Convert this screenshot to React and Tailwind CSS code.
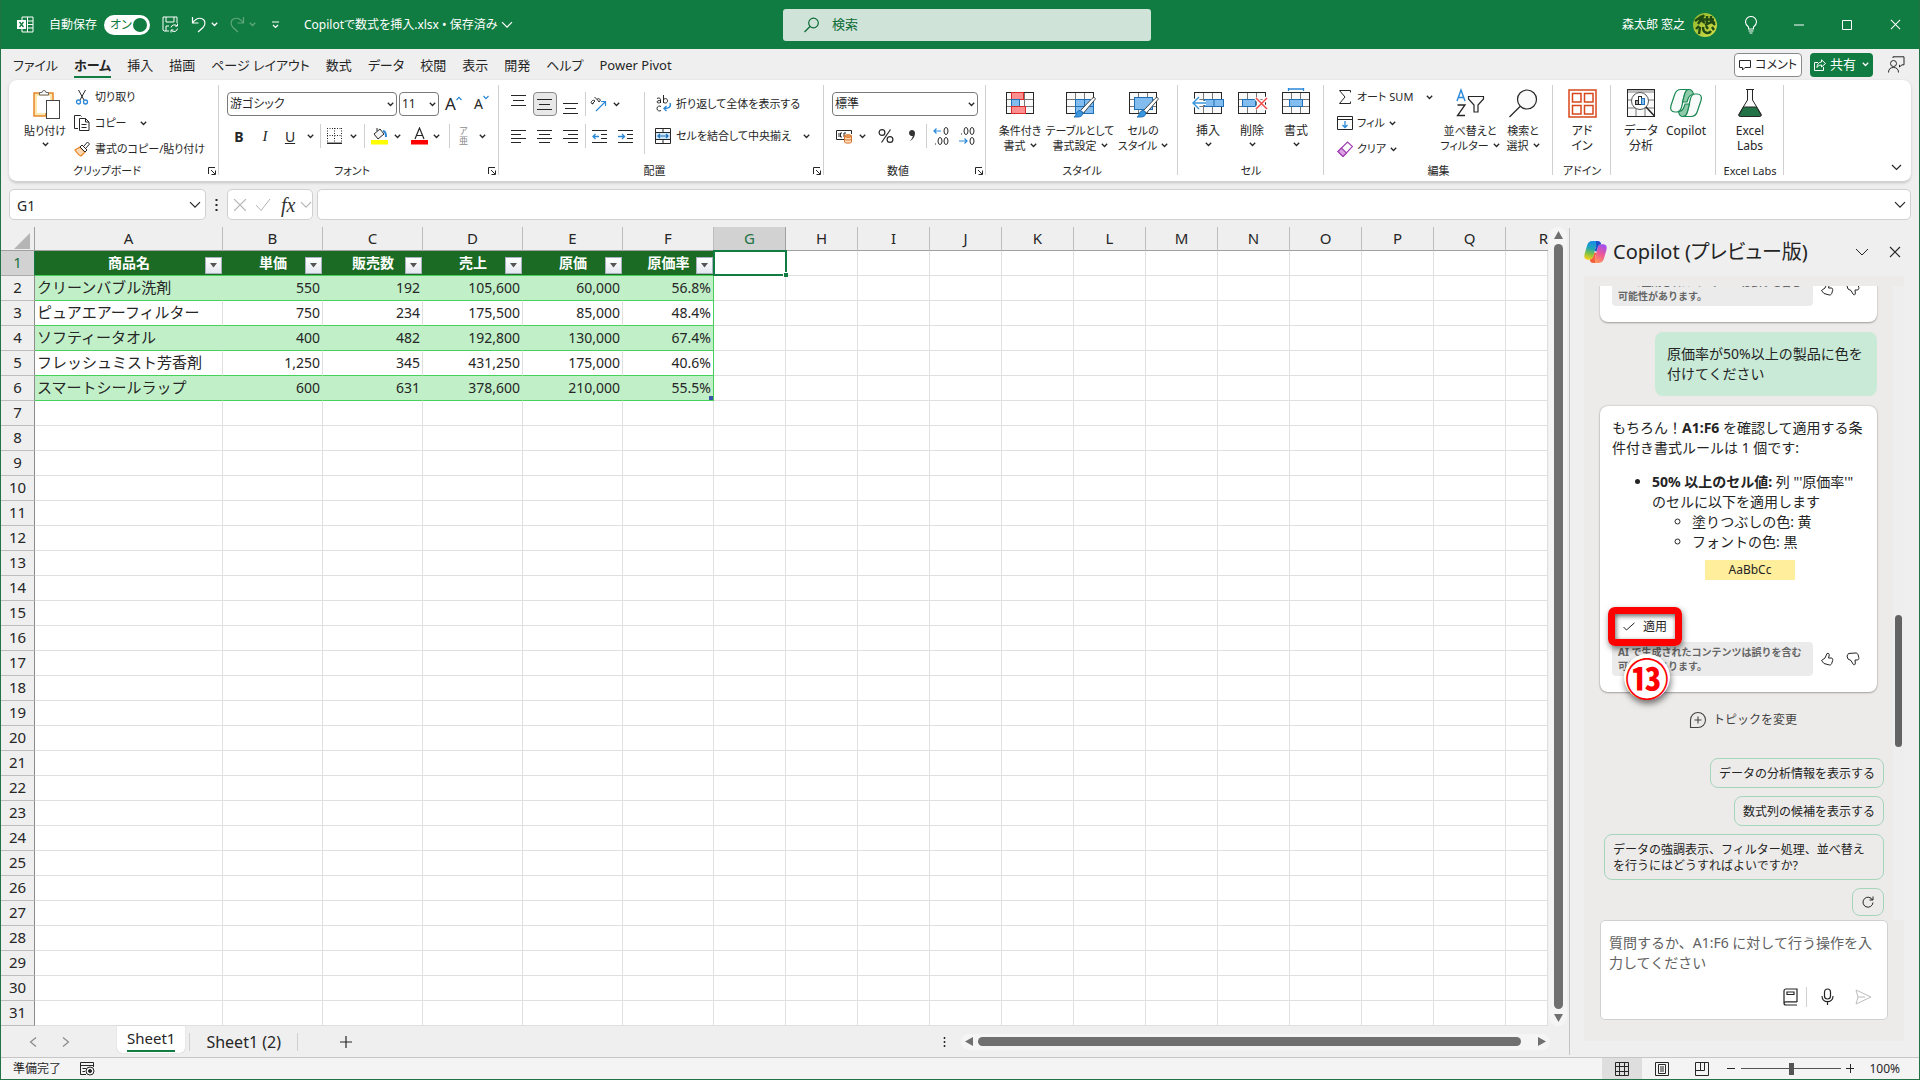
import { useState } from 'react';

const MENU = ['ファイル', 'ホーム', '挿入', '描画', 'ページ レイアウト', '数式', 'データ', '校閲', '表示', '開発', 'ヘルプ', 'Power Pivot'];

const COLUMNS = ['A', 'B', 'C', 'D', 'E', 'F', 'G', 'H', 'I', 'J', 'K', 'L', 'M', 'N', 'O', 'P', 'Q', 'R'];

const HEADERS = ['商品名', '単価', '販売数', '売上', '原価', '原価率'];

const PRODUCTS = [
  ['クリーンバブル洗剤', '550', '192', '105,600', '60,000', '56.8%'],
  ['ピュアエアーフィルター', '750', '234', '175,500', '85,000', '48.4%'],
  ['ソフティータオル', '400', '482', '192,800', '130,000', '67.4%'],
  ['フレッシュミスト芳香剤', '1,250', '345', '431,250', '175,000', '40.6%'],
  ['スマートシールラップ', '600', '631', '378,600', '210,000', '55.5%'],
];

const ROW_COUNT = 31;

const Svg = ({ w, h, children, className = '', sw = 1 }) => (
  <svg width={w} height={h} viewBox={`0 0 ${w} ${h}`} fill="none" stroke="currentColor" strokeWidth={sw} className={`shrink-0 ${className}`} aria-hidden="true">
    {children}
  </svg>
);

const Chevron = ({ className = '' }) => (
  <Svg w={7} h={5} sw={1.3} className={className}><path d="M.8 .8 3.5 3.5 6.2 .8" /></Svg>
);

const BigChevron = ({ className = '' }) => (
  <Svg w={12} h={8} sw={1.2} className={className}><path d="M1 1.2 6 6.2 11 1.2" /></Svg>
);

const CloseIcon = ({ size = 12, className = '' }) => (
  <svg width={size} height={size} viewBox="0 0 12 12" fill="none" stroke="currentColor" strokeWidth="1.1" className={className} aria-hidden="true">
    <path d="m1 1 10 10M11 1 1 11" />
  </svg>
);

/* ---------- title bar ---------- */

const TitleBar = () => {
  const [autoSave, setAutoSave] = useState(true);
  return (
    <header className="flex h-[49px] shrink-0 items-center bg-[#107c41] text-[12px] text-white [font-feature-settings:'palt']">
      <div className="flex flex-1 items-center pl-4">
        <Svg w={17} h={17}>
          <path d="M5 4V1h11v15H5v-3M10.500 1v15M11 5h5M11 8.500h5M11 12h5" />
          <rect x="0" y="4" width="9" height="9" fill="white" stroke="none" />
          <path d="m2.500 6 4 5M6.500 6l-4 5" stroke="#107c41" strokeWidth="1.300" />
        </Svg>
        <span id="autosave" className="ml-[15px]">自動保存</span>
        <button role="switch" aria-checked={autoSave} aria-labelledby="autosave" onClick={() => setAutoSave(!autoSave)}
          className="ml-[7px] flex h-5 w-[46px] items-center justify-between rounded-full bg-white pr-[3px] pl-[6px] text-[#107c41]">
          <span>オン</span>
          <span className="h-[14px] w-[14px] rounded-full bg-[#107c41]" />
        </button>
        <button aria-label="上書き保存" className="ml-3">
          <Svg w={17} h={17}>
            <path d="M7 15H2L1 14V1h14v6M4 1v5h8V1M4 15v-5h3" />
            <path d="M9 11.500a3.500 3.500 0 0 1 6-1.500M15.500 7.500V10H13M15.500 12.500a3.500 3.500 0 0 1-6 2M9 16.500V14h2.500" />
          </Svg>
        </button>
        <button aria-label="元に戻す" className="ml-3 flex items-center gap-1">
          <Svg w={16} h={17} sw={1.2}><path d="M1.500 1v6h6M1.500 7C4 3.500 7 1.500 10.500 2.500c4 1.300 4.500 6 1.500 9L7 16" /></Svg>
          <Chevron />
        </button>
        <button aria-label="やり直し" className="ml-[11px] flex items-center gap-1 text-[#5fa67e]">
          <Svg w={16} h={17} sw={1.2}><path d="M14.500 1v6h-6M14.500 7C12 3.500 9 1.500 5.500 2.500c-4 1.300-4.500 6-1.500 9L9 16" /></Svg>
          <Chevron />
        </button>
        <button aria-label="クイック アクセスのカスタマイズ" className="ml-[15px]">
          <Svg w={9} h={8} sw={1.2}><path d="M1 1h7M2 4l2.500 2.500L7 4" /></Svg>
        </button>
        <button className="ml-6 flex items-center gap-1 whitespace-nowrap">
          Copilotで数式を挿入.xlsx • 保存済み <BigChevron />
        </button>
      </div>
      <label className="ml-4 flex h-8 w-[368px] items-center gap-3 rounded-[3px] bg-[#cfe3d8] pl-5 text-[#0b6a35]">
        <Svg w={17} h={16} sw={1.2}><circle cx="10.500" cy="6" r="4.800" /><path d="M7 9.500 1.500 15" /></Svg>
        <input aria-label="検索" placeholder="検索" className="w-full bg-transparent text-[13px] outline-none placeholder:text-[#0b6a35]" />
      </label>
      <div className="flex flex-1 items-center justify-end pr-[18px]">
        <span>森太郎 窓之</span>
        <Svg w={24} h={24} className="ml-2">
          <defs>
            <linearGradient id="avatar" x1="0" y1="0" x2="1" y2="1"><stop offset="0" stopColor="#8fb52a" /><stop offset="1" stopColor="#d6e04a" /></linearGradient>
          </defs>
          <circle cx="12" cy="12" r="12" fill="url(#avatar)" stroke="none" />
          <path d="M2 8 9 3M5 5l7 5M11 2l-6 9M14 3v9M9 6.500h12M18 3v5l4 2M12 12l7-3 3 3M3 16l3-3M7 14l-1 7M10 14c0 7 6 7 8 4M13 13l2 3M19 14l2 3" stroke="#1f4a14" strokeWidth="2.400" />
        </Svg>
        <button aria-label="ヒント" className="ml-[27px]">
          <Svg w={14} h={18} sw={1.1}><path d="M4.500 13v-2C2.500 9.500 1.500 8 1.500 6a5.500 5.500 0 0 1 11 0c0 2-1 3.500-3 5v2zM4.500 15h5M5.500 17h3" /></Svg>
        </button>
        <button aria-label="最小化" className="ml-9"><Svg w={10} h={10}><path d="M0 5h10" /></Svg></button>
        <button aria-label="最大化" className="ml-[38px]"><Svg w={10} h={10}><path d="M.5 .5h9v9h-9z" /></Svg></button>
        <button aria-label="閉じる" className="ml-[38px]"><CloseIcon size={11} /></button>
      </div>
    </header>
  );
};

/* ---------- ribbon ---------- */

const MenuBar = () => (
  <nav className="flex h-[31px] shrink-0 items-center pr-[14px] pl-1 text-[13px] [font-feature-settings:'palt']">
    {MENU.map((name) => (
      <button key={name} className="px-2 pt-[2px] whitespace-nowrap">
        <span className={name === 'ホーム' ? 'block border-b-2 border-[#107c41] leading-[22px] font-bold' : 'block border-b-2 border-transparent leading-[22px]'}>{name}</span>
      </button>
    ))}
    <div className="ml-auto flex items-center">
      <button className="flex h-6 items-center gap-1 rounded-[4px] border border-[#8a8a8a] bg-white px-1 text-[12px]">
        <Svg w={12} h={12}><path d="M.5 1.500h11v7H6L3.500 11V8.500h-3z" /></Svg>コメント
      </button>
      <button className="ml-2 flex h-6 items-center gap-1 rounded-[4px] bg-[#107c41] px-1 text-white">
        <Svg w={12} h={12}><path d="M4 3.500H.5v8h9V8" /><path d="M7.500 3V.8L11.500 4.500l-4 3.500V6C5 6 4 7 3 8.500 3 5.500 4.500 3.200 7.500 3z" /></Svg>
        共有<Chevron className="ml-[2px]" />
      </button>
      <button aria-label="フィードバック" className="ml-[14px]">
        <Svg w={18} h={17}><circle cx="6.500" cy="7.500" r="3" /><path d="M1.500 16.500c0-3.500 2-5 5-5s5 1.500 5 5M6 2V.8h11v8h-2L12.500 11V8.800" /></Svg>
      </button>
    </div>
  </nav>
);

const Group = ({ label, launcher, className, children }) => (
  <section className={`relative shrink-0 ${className}`}>
    <div className="h-[83px]">{children}</div>
    <div className={`text-center text-[11px] leading-4 whitespace-nowrap ${launcher ? 'pr-[14px]' : ''}`}>{label}</div>
    {launcher && (
      <button aria-label={`${label}の設定`} className="absolute right-[3px] bottom-[6px]">
        <Svg w={8} h={8}><path d="M7 .5H.5V7M3 3l4 4M7.500 3.500v4h-4" /></Svg>
      </button>
    )}
    <span className="absolute top-[5px] right-0 h-[90px] w-px bg-[#d0d0d0]" />
  </section>
);

const Sep = ({ className = '' }) => <span className={`h-6 w-px shrink-0 bg-[#d0d0d0] ${className}`} />;

const BigButton = ({ icon, lines, chevron, below, className = '' }) => (
  <button className={`flex flex-col items-center leading-[15px] whitespace-nowrap ${className}`}>
    <span className="mb-[5px] flex h-[30px] items-center">{icon}</span>
    {lines.map((line, i) => (
      <span key={line} className="flex items-center gap-1">
        {line}{chevron && i === lines.length - 1 && <Chevron />}
      </span>
    ))}
    {below && <Chevron className="mt-1" />}
  </button>
);

const Combo = ({ label, value, className }) => (
  <div className={`relative h-6 ${className}`}>
    <select aria-label={label} className="h-6 w-full appearance-none rounded-[4px] border border-[#7a7a7a] bg-white pl-[2px] text-[12px] leading-5">
      <option>{value}</option>
    </select>
    <Chevron className="pointer-events-none absolute top-[10px] right-[3px]" />
  </div>
);

const Lines = ({ rows }) => (
  <Svg w={16} h={15}>{rows.map(([x1, x2, y]) => <path key={y} d={`M${x1} ${y}.500H${x2}`} />)}</Svg>
);

const GridIcon = ({ children }) => (
  <Svg w={32} h={30}>
    <rect x="2.500" y="4.500" width="27" height="21" fill="#fafafa" />
    <path d="M11.500 5v20M20.500 5v20M3 11.500h26M3 18.500h26" stroke="#777" />
    {children}
  </Svg>
);

const Brush = () => (
  <>
    <path d="M31 11.500 19.500 25l-3-2.500L28 10.500c2-2 4-.5 3 1z" fill="white" stroke="#444" />
    <path d="M16 22.500c2 .5 3 2 2.500 4-1 3-5.500 2.500-8.500 2.500 2.500-1 2-6.500 6-6.500z" fill="#3a96dd" stroke="#1e6fb5" />
  </>
);

const Decimals = ({ children }) => (
  <Svg w={20} h={22}>{children}</Svg>
);

const Ribbon = () => (
  <div className="relative mx-2 flex h-[102px] shrink-0 rounded-lg border-b border-[#d0d0d0] bg-white text-[12px] shadow-[0_1px_3px_rgba(0,0,0,0.18)] [font-feature-settings:'palt']">
    <Group label="クリップボード" launcher className="w-[210px]">
      <div className="flex pt-1">
        <BigButton lines={['貼り付け']} below className="ml-3 w-12 pt-1 text-[11px]" icon={
          <Svg w={29} h={31} className="ml-[3px]">
            <path d="M2 5h19v9h-7v14H2z" fill="#fde7b0" stroke="#e8862a" strokeWidth="1.500" />
            <path d="M5 8h13v6h-4v11H5z" fill="white" stroke="none" />
            <path d="M7.500 7V4.500h2.500a2 2 0 0 1 4 0h2.500V7z" fill="#fafafa" stroke="#666" />
            <rect x="14.500" y="12.500" width="13" height="18" fill="white" stroke="#444" />
          </Svg>} />
        <div className="ml-[5px] flex flex-col text-[11px] whitespace-nowrap [&>button]:flex [&>button]:h-[26px] [&>button]:items-center [&>button]:gap-[5px]">
          <button>
            <Svg w={16} h={16}><path d="M4.500 1 10 11M11.500 1 6 11" /><circle cx="4.500" cy="13" r="2" stroke="#2b88d8" strokeWidth="1.300" /><circle cx="11.500" cy="13" r="2" stroke="#2b88d8" strokeWidth="1.300" /></Svg>
            切り取り
          </button>
          <button>
            <Svg w={16} h={16}><path d="M4 13.500H.5V.5h6l1 1" /><path d="M5.500 3.500h6l3.500 3.500v8.500H5.500zM11.500 3.500V7H15M7.500 9.500h5M7.500 12.500h5" /></Svg>
            コピー<Chevron className="ml-2" />
          </button>
          <button>
            <Svg w={16} h={16}><path d="M1 9l5-3 5 5-4 4C4 14 3 12 1 9z" fill="#fbd9b5" stroke="#e8862a" strokeWidth="1.300" /><path d="m6 6 2-2 5 5-2 2zM9.500 5.500l4-4.500 2 2-4 4.500" fill="white" /></Svg>
            書式のコピー/貼り付け
          </button>
        </div>
      </div>
    </Group>

    <Group label="フォント" launcher className="w-[280px]">
      <div className="flex flex-col gap-2 pt-3 pl-2">
        <div className="flex h-6 items-center">
          <Combo label="フォント名" value="游ゴシック" className="w-[170px]" />
          <Combo label="フォント サイズ" value="11" className="ml-[2px] w-10" />
          <button aria-label="フォント サイズの拡大" className="ml-[6px] flex items-start text-[17px] leading-5">A<Svg w={6} h={5} sw={1.2} className="mt-[2px] text-[#2b88d8]"><path d="M.5 4 3 1.300 5.500 4" /></Svg></button>
          <button aria-label="フォント サイズの縮小" className="ml-3 flex items-start text-[14px] leading-[22px]">A<Svg w={6} h={5} sw={1.2} className="mt-[2px] text-[#2b88d8]"><path d="M.5 1 3 3.700 5.500 1" /></Svg></button>
        </div>
        <div className="flex h-6 items-center">
          <button className="ml-1 w-4 text-[14px] font-bold">B</button>
          <button className="ml-[10px] w-4 font-['Liberation_Serif'] text-[15px] italic">I</button>
          <button className="ml-[9px] w-4 text-[14px] underline">U</button>
          <Chevron className="ml-[9px]" />
          <Sep className="ml-[6px]" />
          <Svg w={16} h={16} className="ml-[6px]"><path d="M.5 0v15M7.500 0v15M14.500 0v15M0 .5h15M0 7.500h15" strokeDasharray="1 1.500" /><path d="M0 15.300h15" strokeWidth="1.500" /></Svg>
          <Chevron className="ml-[7px]" />
          <Sep className="ml-[7px]" />
          <Svg w={18} h={18} className="ml-[6px]"><path d="m3 7 6-5 4 5-6 5zM6 4V1" fill="#f4f4f4" /><path d="M12 4c3 0 3 3 3 6" stroke="#2b88d8" strokeWidth="2" /><rect x="0" y="13" width="17" height="4.500" fill="#ff0" stroke="none" /></Svg>
          <Chevron className="ml-[5px]" />
          <Svg w={18} h={18} className="ml-[10px]"><path d="M4 12 8.500 1 13 12M5.500 8.500h6" strokeWidth="1.200" /><rect x="0" y="13" width="17" height="4.500" fill="red" stroke="none" /></Svg>
          <Chevron className="ml-1" />
          <Sep className="ml-[9px]" />
          <span className="ml-[9px] flex flex-col items-center text-[9px] leading-[10px] text-[#8a8a8a]"><span>ア</span><span>亜</span></span>
          <Chevron className="ml-[11px]" />
        </div>
      </div>
    </Group>

    <Group label="配置" launcher className="w-[325px]">
      <div className="flex pt-3 pl-2">
        <div className="flex flex-col gap-2">
          <div className="flex h-6 items-center">
            <button aria-label="上揃え" className="ml-1 pb-[6px]"><Lines rows={[[0, 15, 1], [2, 13, 6], [0, 15, 11]]} /></button>
            <button aria-label="上下中央揃え" className="ml-[6px] flex h-6 w-6 items-center justify-center rounded-[4px] border border-[#8a8a8a] bg-[#e8e8e8]"><Lines rows={[[0, 15, 2], [2, 13, 7], [0, 15, 12]]} /></button>
            <button aria-label="下揃え" className="ml-[6px] pt-[6px]"><Lines rows={[[0, 15, 3], [2, 13, 8], [0, 15, 13]]} /></button>
            <Sep className="ml-[6px]" />
            <Svg w={18} h={18} className="ml-1"><path d="m2 9 3-3M1.500 6.500c-1 1.500.5 3 2 2M5 6c-1-1.300-2.500-.8-3.500.5M4.500 2l5 5M7 4.500c1-1.300 2.500-1 3 0s0 2.500-1.500 2" /><path d="M6 16 15 7M11 6.500h4.500V11" stroke="#2b88d8" strokeWidth="1.200" /></Svg>
            <Chevron className="ml-[5px]" />
          </div>
          <div className="flex h-6 items-center">
            <button aria-label="左揃え" className="ml-1"><Lines rows={[[0, 15, 1], [0, 10, 5], [0, 15, 9], [0, 10, 13]]} /></button>
            <button aria-label="中央揃え" className="ml-[10px]"><Lines rows={[[0, 15, 1], [2, 13, 5], [0, 15, 9], [2, 13, 13]]} /></button>
            <button aria-label="右揃え" className="ml-[10px]"><Lines rows={[[0, 15, 1], [5, 15, 5], [0, 15, 9], [5, 15, 13]]} /></button>
            <Sep className="ml-[6px]" />
            <Svg w={16} h={15} className="ml-[6px]"><path d="M0 1.500h15M9 5.500h6M9 9.500h6M0 13.500h15" /><path d="M7 7.500H1M3.500 5 1 7.500 3.500 10" stroke="#2b88d8" strokeWidth="1.300" /></Svg>
            <Svg w={16} h={15} className="ml-[10px]"><path d="M0 1.500h15M9 5.500h6M9 9.500h6M0 13.500h15" /><path d="M0 7.500h6M4 5l2.500 2.500L4 10" stroke="#2b88d8" strokeWidth="1.300" /></Svg>
          </div>
        </div>
        <span className="ml-[10px] h-[62px] w-px bg-[#d0d0d0]" />
        <div className="ml-[10px] flex flex-col gap-2 text-[11px] whitespace-nowrap">
          <button className="flex h-6 items-center gap-1">
            <Svg w={17} h={18}><path d="M2 3.500c1.500-1 3.500-.5 3.500 1V8M5.500 5.500C3.500 5.500 2 6 2 7s2.500 1.500 3.500 0M8.500 0v8M8.500 5c.5-2 4-2 4 .8s-3.500 2.800-4 1M6 11.500c-1.500-1-4-.3-4 2s2.500 3 4 2" /><path d="M15 8c1.500 4-1 5.500-6 5.500M11.500 11 9 13.500l2.500 2.500" stroke="#2b88d8" strokeWidth="1.400" /></Svg>
            折り返して全体を表示する
          </button>
          <button className="flex h-6 items-center gap-1">
            <Svg w={17} h={16}><path d="M.5 .5h15v15H.5zM.5 4.500h15M.5 11.500h15M8 .5v4M8 11.500v4" /><path d="M1 5h14v6H1z" fill="#cde6f9" stroke="none" /><path d="M3 8h10M5 6 3 8l2 2M11 6l2 2-2 2" stroke="#1e6fb5" strokeWidth="1.200" /></Svg>
            セルを結合して中央揃え<Chevron className="ml-2" />
          </button>
        </div>
      </div>
    </Group>

    <Group label="数値" launcher className="w-[162px]">
      <div className="flex flex-col gap-2 pt-3 pl-2">
        <Combo label="表示形式" value="標準" className="w-[146px]" />
        <div className="flex h-6 items-center">
          <Svg w={18} h={16} className="ml-1"><path d="M8 11.500H.5v-9h15V6M3 5v4M6 5H4.500v4H6M10 5H8v4" /><path d="M8.500 8v6c0 1.500 7 1.500 7 0V8z" fill="#fbd9b5" stroke="#d8722a" /><ellipse cx="12" cy="8" rx="3.500" ry="1.300" fill="#f4a261" stroke="#d8722a" /><path d="M8.500 11c0 1.300 7 1.300 7 0" stroke="#d8722a" /></Svg>
          <Chevron className="ml-[5px]" />
          <button aria-label="パーセント スタイル" className="ml-3"><Svg w={16} h={16} sw={1.2}><path d="M12.500 1.500 3.500 14.500" /><circle cx="4" cy="4.500" r="2.900" /><circle cx="12" cy="11.500" r="2.900" /></Svg></button>
          <button aria-label="桁区切り" className="ml-[14px]"><Svg w={8} h={14}><path d="M4 1a3 3 0 1 0 .8 5.900C4.500 9 3 11 1 12.500c4-1.500 6-5 6-8.500C7 2 5.500 1 4 1z" fill="#333" stroke="none" /></Svg></button>
          <Sep className="ml-[10px]" />
          <button aria-label="小数点以下の表示桁数を増やす" className="ml-[6px]"><Decimals><path d="M1 6h7M3.500 3.500 1 6l2.500 2.500" stroke="#2b88d8" strokeWidth="1.200" /><ellipse cx="13" cy="6" rx="2" ry="3.500" /><path d="M2.500 18.500v1" /><ellipse cx="7" cy="16" rx="2" ry="3.500" /><ellipse cx="13" cy="16" rx="2" ry="3.500" /></Decimals></button>
          <button aria-label="小数点以下の表示桁数を減らす" className="ml-[6px]"><Decimals><path d="M2.500 8.500v1" /><ellipse cx="7" cy="6" rx="2" ry="3.500" /><ellipse cx="13" cy="6" rx="2" ry="3.500" /><path d="M0 16h8M5.500 13.500 8 16l-2.500 2.500" stroke="#2b88d8" strokeWidth="1.200" /><ellipse cx="13" cy="16" rx="2" ry="3.500" /></Decimals></button>
        </div>
      </div>
    </Group>

    <Group label="スタイル" className="w-[192px]">
      <div className="flex pt-2 text-[11px]">
        <BigButton lines={['条件付き', '書式']} chevron className="ml-[9px] w-[50px]" icon={
          <GridIcon><rect x="7.500" y="4.500" width="12" height="7" fill="#ff8f8f" stroke="#d92b2b" /><rect x="7.500" y="11.500" width="8" height="7" fill="#83bdf0" stroke="#1e6fb5" /><rect x="7.500" y="18.500" width="14" height="7" fill="#ff8f8f" stroke="#d92b2b" /></GridIcon>} />
        <BigButton lines={['テーブルとして', '書式設定']} chevron className="w-[70px]" icon={
          <GridIcon><rect x="11.500" y="11.500" width="18" height="14" fill="#83bdf0" stroke="#1e6fb5" /><path d="M20.500 11.500v14M11.500 18.500h18" stroke="#1e6fb5" /><Brush /></GridIcon>} />
        <BigButton lines={['セルの', 'スタイル']} chevron className="w-[56px]" icon={
          <GridIcon><rect x="7.500" y="9.500" width="18" height="12" fill="#83bdf0" stroke="#1e6fb5" /><Brush /></GridIcon>} />
      </div>
    </Group>

    <Group label="セル" className="w-[146px]">
      <div className="flex pt-2">
        <BigButton lines={['挿入']} below className="ml-2 w-11" icon={
          <GridIcon><rect x="12.500" y="11.500" width="19" height="7" fill="#83bdf0" stroke="#1e6fb5" /><path d="M22 11.500v7" stroke="#1e6fb5" /><path d="M1 15h13M7 9l-6 6 6 6" stroke="white" strokeWidth="4" /><path d="M1 15h13M7 9l-6 6 6 6" stroke="#3a96dd" strokeWidth="1.500" /></GridIcon>} />
        <BigButton lines={['削除']} below className="w-11" icon={
          <GridIcon><rect x="6.500" y="11.500" width="13" height="7" fill="#83bdf0" stroke="#1e6fb5" /><path d="m20 10 11 11M31 10 20 21" stroke="white" strokeWidth="4" /><path d="m20 10 11 11M31 10 20 21" stroke="#f04a4a" strokeWidth="1.500" /></GridIcon>} />
        <BigButton lines={['書式']} below className="w-11" icon={
          <GridIcon><rect x="9.500" y="11.500" width="13" height="7" fill="#83bdf0" stroke="#1e6fb5" /><path d="M8.500 1h15M8.500 0v3M23.500 0v3" stroke="#2b88d8" strokeWidth="1.300" /></GridIcon>} />
      </div>
    </Group>

    <Group label="編集" className="w-[229px]">
      <div className="flex pt-1 text-[11px]">
        <div className="ml-[13px] flex w-24 flex-col whitespace-nowrap [&>button]:flex [&>button]:h-[26px] [&>button]:items-center [&>button]:gap-1">
          <button>
            <Svg w={16} h={16}><path d="M13.500 3.500v-2h-11L8 8l-5.500 6.500h11v-2" /></Svg>
            オート SUM<Chevron className="ml-auto" />
          </button>
          <button>
            <Svg w={16} h={16}><path d="M.5 1.500h15v13H.5zM.5 4.500h15" /><path d="M8 6v6.500M5.500 10 8 12.500l2.500-2.500" stroke="#2b88d8" strokeWidth="1.300" /></Svg>
            フィル<Chevron />
          </button>
          <button>
            <Svg w={16} h={16}><path d="M1 10.500 10.500 1l5 4.500L6 15.500z" fill="white" stroke="#a33fb5" strokeWidth="1.200" /><path d="m1 10.500 3.500-3.500 5 5L6 15.500z" fill="#dba3e3" stroke="#a33fb5" strokeWidth="1.200" /></Svg>
            クリア<Chevron />
          </button>
        </div>
        <BigButton lines={['並べ替えと', 'フィルター']} chevron className="ml-2 w-[58px] pt-1" icon={
          <Svg w={30} h={30}><path d="M2 13 6 2l4 11M3.500 9.500h5" stroke="#2b88d8" strokeWidth="1.400" /><path d="M2.500 17H10L2.500 27.500H10" strokeWidth="1.300" /><path d="M13.500 8.500h15v2.500L23 17v7h-4v-7l-5.500-6z" fill="#fafafa" strokeWidth="1.200" /></Svg>} />
        <BigButton lines={['検索と', '選択']} chevron className="w-12 pt-1" icon={
          <Svg w={30} h={30} sw={1.2}><circle cx="19" cy="11.500" r="9.500" fill="#fafafa" /><path d="M12 18.500 1.500 29" /></Svg>} />
      </div>
    </Group>

    <Group label="アドイン" className="w-[58px]">
      <BigButton lines={['アド', 'イン']} className="w-full pt-2" icon={
        <Svg w={29} h={29} sw={1.5}><path d="M1 1h27v27H1zM4.500 4.500h8.500v8.500H4.500zM16.500 4.500H25v8.500h-8.500zM4.500 16.500h8.500V25H4.500zM16.500 16.500H25V25h-8.500z" stroke="#d8471b" /></Svg>} />
    </Group>

    <Group label="" className="w-[105px]">
      <div className="flex pt-2">
        <BigButton lines={['データ', '分析']} className="ml-2 w-11" icon={
          <Svg w={30} h={30}><rect x="1.500" y="1.500" width="27" height="27" fill="#fafafa" /><path d="M2 2h26v3H2z" fill="#bbb" stroke="none" /><path d="M2 12h26M2 20h26M10 20v8M19 20v8" stroke="#777" /><circle cx="14" cy="13" r="8.500" fill="white" stroke="#555" /><rect x="9.500" y="12.500" width="3" height="4" fill="#aaa" /><rect x="12.500" y="8.500" width="3" height="8" fill="white" /><rect x="15.500" y="10.500" width="3" height="6" fill="#83bdf0" stroke="#1e6fb5" /><path d="m20 19 8.500 9" strokeWidth="1.500" /></Svg>} />
        <BigButton lines={['Copilot']} className="w-[46px]" icon={
          <Svg w={34} h={30} sw={1.2} className="text-[#198754]">
            <g id="leaf">
              <path d="M20 1.500h-8c-3.500 0-5.500 2-6.500 5.500L2 17.500c-1.200 4 .3 6.500 4 6.500h2c2.500 0 3.500-1.500 4.500-4.500l3-12.500c.8-3 2-5.500 4.500-5.500z" fill="#f8fbf9" />
              <path d="M20 1.500c3 0 4 2 4.500 5-3 0-4.500 1.500-5.500 4.500L18 14h-4.500l2-7.500c.8-3 2-5 4.500-5z" fill="#8fcbaa" />
            </g>
            <use href="#leaf" transform="rotate(180 17 15)" />
          </Svg>} />
      </div>
    </Group>

    <Group label="Excel Labs" className="w-[68px]">
      <BigButton lines={['Excel', 'Labs']} className="w-full pt-2" icon={
        <Svg w={28} h={30}><path d="M10 1.500h8M11.500 2v10L3 26c-.8 1.500 0 2.500 1.500 2.500h19c1.500 0 2.300-1 1.500-2.500L16.500 12V2" fill="#fafafa" /><path d="M7.500 19h13l4 7c.8 1.500 0 2.500-1 2.500h-19c-1 0-1.800-1-1-2.500z" fill="#217346" /></Svg>} />
    </Group>
    <button aria-label="リボンを折りたたむ" className="absolute right-[9px] bottom-[10px]"><Svg w={11} h={7} sw={1.2}><path d="m1 1 4.500 4.500L10 1" /></Svg></button>
  </div>
);

const FormulaBar = () => (
  <div className="mx-2 mt-[7px] flex h-[31px] shrink-0 items-center">
    <div className="flex h-full w-[197px] items-center rounded-[5px] border border-[#d0d0d0] bg-white pr-1 pl-[7px]">
      <input aria-label="名前ボックス" defaultValue="G1" className="w-0 flex-1 pt-[2px] text-[14px] outline-none" />
      <BigChevron />
    </div>
    <Svg w={3} h={12} className="mx-[9px]"><path d="M1.500 0v12" strokeWidth="2" strokeDasharray="2 3" /></Svg>
    <div className="flex h-full w-[86px] items-center rounded-[5px] border border-[#d0d0d0] bg-white pl-[5px] text-[#b5b5b5]">
      <button aria-label="キャンセル"><CloseIcon size={14} /></button>
      <button aria-label="入力" className="ml-2"><Svg w={16} h={14}><path d="m1 7 5 5.500L15 1" /></Svg></button>
      <button aria-label="関数の挿入" className="ml-[10px] font-['Liberation_Serif'] text-[20px] leading-6 text-[#333] italic">fx</button>
      <BigChevron className="ml-[5px]" />
    </div>
    <div className="ml-1 flex h-full flex-1 items-center rounded-[5px] border border-[#d0d0d0] bg-white pr-1">
      <input aria-label="数式バー" className="w-0 flex-1 px-2 text-[14px] outline-none" />
      <BigChevron />
    </div>
  </div>
);

/* ---------- sheet ---------- */

const HeaderCell = ({ text }) => (
  <td className="relative h-[25px] border-b border-[#47d15a] bg-[#1b6b24] p-0 text-center align-top text-[14px] leading-[23px] font-bold text-white">
    {text}
    <button aria-label={`${text}のフィルター`} className="absolute right-px bottom-px flex h-[17px] w-[17px] items-center justify-center border border-[#a8b0bd] bg-gradient-to-b from-white to-[#e4e8ef]">
      <Svg w={7} h={5}><path d="M0 0h7L3.500 4.500z" fill="#555" stroke="none" /></Svg>
    </button>
  </td>
);

const SheetRow = ({ n }) => {
  const product = PRODUCTS[n - 2];
  const band = n % 2 === 0;
  return (
    <tr>
      <th scope="row" className={n === 1
        ? 'h-[25px] border-r border-b border-r-[#107c41] border-b-[#ababab] bg-[#d2d2d2] p-0 align-top text-[15px] leading-[23px] font-normal text-[#217346]'
        : 'h-[25px] border-r border-b border-r-[#8c8c8c] border-b-[#bdbdbd] bg-[#efefef] p-0 align-top text-[15px] leading-[23px] font-normal'}>{n}</th>
      {COLUMNS.map((col, i) => {
        if (n === 1 && i < 6) return <HeaderCell key={col} text={HEADERS[i]} />;
        if (n === 1 && col === 'G') {
          return (
            <td key={col} className="relative h-[25px] border-b border-[#e0e0e0] p-0">
              <span className="absolute -inset-px border-2 border-[#107c41]" />
              <span className="absolute -right-[2px] -bottom-[2px] h-[5px] w-[5px] border-t border-l border-white bg-[#107c41]" />
            </td>
          );
        }
        if (product && i < 6) {
          return (
            <td key={col} className={`relative h-[25px] border-r border-b border-b-[#47d15a] py-0 align-top leading-[23px] whitespace-nowrap ${i === 0 ? 'pl-[2px] text-left text-[15px]' : 'pr-[2px] text-right text-[14px]'} ${band ? 'bg-[#c1f0c8]' : 'bg-white'} ${i === 5 ? 'border-r-[#47d15a]' : band ? 'border-r-[#c1f0c8]' : 'border-r-[#e0e0e0]'}`}>
              {product[i]}
              {n === 6 && i === 5 && <span className="absolute right-0 bottom-0 h-1 w-1 bg-[#3b58a8]" />}
            </td>
          );
        }
        return <td key={col} className="h-[25px] border-r border-b border-[#e0e0e0] p-0" />;
      })}
    </tr>
  );
};

const Sheet = () => (
  <div className="flex min-h-0 flex-1 overflow-hidden pt-[7px]">
    <div className="min-w-0 flex-1 overflow-hidden">
      <table className="w-full table-fixed border-separate border-spacing-0">
        <colgroup>
          <col className="w-[34px]" />
          <col className="w-[188px]" />
          <col className="w-[100px]" /><col className="w-[100px]" /><col className="w-[100px]" /><col className="w-[100px]" />
          <col className="w-[91px]" />
          {COLUMNS.slice(6, 17).map((c) => <col key={c} className="w-[72px]" />)}
          <col />
        </colgroup>
        <thead>
          <tr>
            <th className="h-6 border-r border-b border-[#a0a0a0] p-0">
              <Svg w={17} h={16} className="mt-1 mr-[3px] ml-auto"><path d="M16 0v16H0z" fill="#b5b5b5" stroke="none" /></Svg>
            </th>
            {COLUMNS.map((c) => (
              <th key={c} scope="col" className={c === 'G'
                ? 'h-6 border-r border-b border-[#a0a0a0] bg-[#d2d2d2] p-0 text-[15px] leading-[23px] font-normal text-[#217346]'
                : c === 'R'
                  ? 'h-6 border-b border-[#a0a0a0] p-0 text-right text-[15px] leading-[23px] font-normal'
                  : 'h-6 border-r border-b border-r-[#bdbdbd] border-b-[#a0a0a0] p-0 text-[15px] leading-[23px] font-normal'}>{c}</th>
            ))}
          </tr>
        </thead>
        <tbody className="bg-white">
          {Array.from({ length: ROW_COUNT }, (_, i) => <SheetRow key={i} n={i + 1} />)}
        </tbody>
      </table>
    </div>
    <div className="mr-[2px] ml-px flex w-[18px] shrink-0 flex-col items-center rounded-full bg-[#f5f5f5] py-1">
      <Svg w={9} h={8}><path d="M4.500 0 9 8H0z" fill="#707070" stroke="none" /></Svg>
      <div className="my-[5px] w-[9px] flex-1 rounded-full bg-[#707070]" />
      <Svg w={9} h={8}><path d="M0 0h9L4.500 8z" fill="#707070" stroke="none" /></Svg>
    </div>
  </div>
);

const SheetTabs = () => (
  <div className="flex h-[31px] shrink-0 items-center text-[15px]">
    <button aria-label="前のシート" className="ml-[28px] text-[#8a8a8a]"><Svg w={8} h={10} sw={1.2}><path d="M7 .5 1.500 5 7 9.500" /></Svg></button>
    <button aria-label="次のシート" className="ml-[25px] text-[#8a8a8a]"><Svg w={8} h={10} sw={1.2}><path d="M1 .5 6.500 5 1 9.500" /></Svg></button>
    <button className="ml-[47px] h-[27px] self-start rounded-b-[5px] bg-white px-[10px] shadow-[0_0_1px_rgba(0,0,0,0.3)]">
      <span className="block border-b-2 border-[#107c41] pb-[2px] leading-5">Sheet1</span>
    </button>
    <Sep className="ml-1 h-[18px]" />
    <button className="px-4 text-[16px]">Sheet1 (2)</button>
    <Sep className="h-[18px]" />
    <button aria-label="新しいシート" className="ml-[42px]"><Svg w={12} h={12} sw={1.2}><path d="M6 0v12M0 6h12" /></Svg></button>
    <Svg w={3} h={10} className="ml-auto"><path d="M1.500 0v10" strokeWidth="1.500" strokeDasharray="2 2" /></Svg>
    <div className="mr-[19px] ml-[15px] flex h-4 w-[589px] items-center rounded-full bg-[#f5f5f5] px-1">
      <Svg w={8} h={9}><path d="M0 4.500 8 0v9z" fill="#707070" stroke="none" /></Svg>
      <div className="mr-[17px] ml-[5px] h-[9px] flex-1 rounded-full bg-[#707070]" />
      <Svg w={8} h={9}><path d="M8 4.500 0 0v9z" fill="#707070" stroke="none" /></Svg>
    </div>
  </div>
);

/* ---------- copilot pane ---------- */

const CopilotLogo = () => (
  <svg width="23" height="22" viewBox="0 0 34 30" preserveAspectRatio="none" className="shrink-0" aria-hidden="true">
    <defs>
      <linearGradient id="cpA" x1="0.600" y1="0" x2="0.400" y2="1"><stop offset="0" stopColor="#1b8ae8" /><stop offset=".4" stopColor="#1fa6b9" /><stop offset=".7" stopColor="#7fc241" /><stop offset="1" stopColor="#f7cf1a" /></linearGradient>
      <linearGradient id="cpB" x1="0.700" y1="0" x2="0.300" y2="1"><stop offset="0" stopColor="#a04df0" /><stop offset=".5" stopColor="#ee5a94" /><stop offset="1" stopColor="#ff9a55" /></linearGradient>
    </defs>
    <path d="M20 0h-8c-4 0-6.500 2.500-7.500 6L1 17.500C-.5 22.500 1 25.500 6 25.500h2.500c3 0 4.500-2 5.500-5l3.500-13C18.300 4.500 19.500 2 22 2z" fill="url(#cpA)" />
    <path d="M14 30h8c4 0 6.500-2.500 7.500-6L33 12.500c1.500-5 0-8-5-8h-2.500c-3 0-4.500 2-5.500 5l-3.500 13c-.8 3-2 5.500-4.500 5.500z" fill="url(#cpB)" />
    <path d="M18 0h2c3.500 0 5 2 5.500 4.600-3 .2-4.500 2-5.500 4.900L18.700 14h-3l2-7C18.500 4 17 1.500 18 0z" fill="#1c4fc9" />
    <path d="M16 30h-2c-3.500 0-5-2-5.500-4.600 3-.2 4.500-2 5.500-4.900l1.300-4.500h3l-2 7c-.8 3 .7 5.500-.3 7z" fill="#f2603e" />
  </svg>
);

const ThumbUp = () => (
  <Svg w={14} h={14}><path d="M1.500 8.500 5 6l2-4.500c1.800-.8 2.700.8 2 2.500L8.500 6H11c1.500 0 2 1 1.700 2.300l-1 3.200c-.5 1.300-1.500 1.700-2.700 1.400L4 11.500z" /></Svg>
);

const ThumbDown = () => (
  <Svg w={14} h={14}><path d="m1 4 1.500-2.500L9 1c1.500-.2 2.500.3 3 1.500l.8 3c.3 1.500-.3 2.500-1.800 2.500H9l.3 3c.2 2-1.500 2.500-2.300 1L5 8.500 2 7z" /></Svg>
);

const Disclaimer = () => (
  <div className="flex items-center">
    <p className="w-[201px] rounded-[4px] bg-[#ebebeb] px-[6px] py-[3px] text-[10px] leading-[14px] font-bold text-[#666]">
      AI で生成されたコンテンツは誤りを含む<br />可能性があります。
    </p>
    <button aria-label="良い回答" className="ml-[7px]"><ThumbUp /></button>
    <button aria-label="悪い回答" className="ml-3"><ThumbDown /></button>
  </div>
);

const Chip = ({ children }) => (
  <button className="rounded-lg border border-[#a5d6bb] px-2 pt-[7px] pb-[5px] text-left text-[12px] leading-4">{children}</button>
);

const CopilotPane = () => (
  <aside className="mt-2 mb-[2px] flex w-[350px] shrink-0 flex-col border-l border-[#c4c4c4] pl-[14px] text-[#242424]">
    <div className="flex h-[48px] shrink-0 items-center">
      <CopilotLogo />
      <h2 className="ml-[6px] text-[20px] leading-8 whitespace-nowrap [font-feature-settings:'palt']">Copilot (プレビュー版)</h2>
      <button aria-label="作業ウィンドウのオプション" className="ml-auto"><Svg w={14} h={9}><path d="m1 1 6 6 6-6" /></Svg></button>
      <button aria-label="閉じる" className="mr-[18px] ml-5"><CloseIcon /></button>
    </div>
    <div className="mr-[15px] mb-[14px] flex min-h-0 flex-1 flex-col bg-[#ecebe9] pt-[10px]">
      <div className="flex min-h-0 flex-1">
        <div className="flex min-h-0 min-w-0 flex-1 flex-col justify-end overflow-hidden pr-[9px] pl-4">
          <div className="mr-[7px] shrink-0 rounded-lg bg-white px-3 pt-3 pb-4 shadow-[0_1px_2px_rgba(0,0,0,0.35)]"><Disclaimer /></div>
          <div className="mt-[10px] mr-[7px] w-[222px] shrink-0 self-end rounded-lg bg-[#c9ead7] px-3 py-3 text-[14px] leading-5">
            原価率が50%以上の製品に色を付けてください
          </div>
          <div className="mt-[10px] mr-[7px] shrink-0 rounded-lg bg-white px-3 pt-3 pb-4 text-[14px] leading-5 shadow-[0_0_2px_rgba(0,0,0,0.25),0_1px_2px_rgba(0,0,0,0.25)]">
            <p>もちろん！<b>A1:F6</b> を確認して適用する条件付き書式ルールは 1 個です:</p>
            <ul className="mt-[14px] list-disc pl-10">
              <li><b>50% 以上のセル値:</b> 列 "'原価率'" のセルに以下を適用します
                <ul className="list-[circle] pl-10">
                  <li>塗りつぶしの色: 黄</li>
                  <li>フォントの色: 黒</li>
                </ul>
              </li>
            </ul>
            <div className="mt-2 ml-[93px] w-[90px] bg-[#ffee9c] text-center text-[12px] leading-5">AaBbCc</div>
            <div className="relative mt-[34px] mb-[3px] ml-[3px] w-[60px]">
              <button className="flex h-[25px] w-full items-center justify-end gap-2 pr-2 text-[12px]">
                <Svg w={12} h={9}><path d="m.5 5 3 3L11.500 .8" /></Svg>適用
              </button>
              <span className="pointer-events-none absolute -inset-[7px] rounded-[7px] border-[7px] border-[#fe0000] shadow-[1px_3px_6px_rgba(0,0,0,0.5),inset_1px_2px_5px_rgba(0,0,0,0.6)]" />
              <span className="pointer-events-none absolute top-[40px] left-[9px] z-10 flex h-[46px] w-[46px] items-center justify-center rounded-full bg-white font-['Noto_Sans_CJK_JP',sans-serif] text-[44px] leading-[46px] font-bold text-[#fe0000] shadow-[1px_4px_6px_rgba(0,0,0,0.5)]">⑬</span>
            </div>
            <Disclaimer />
          </div>
          <button className="mt-4 flex h-6 shrink-0 items-center justify-center gap-[6px] pl-[2px] text-[12px] text-[#444]">
            <Svg w={18} h={18} sw={1.1}><path d="M1.500 16.500v-7.500a7.500 7.500 0 1 1 7.500 7.500zM9 5.500v7M5.500 9h7" /></Svg>トピックを変更
          </button>
          <div className="mt-[26px] mb-1 flex shrink-0 flex-col items-end gap-2 pl-1">
            <Chip>データの分析情報を表示する</Chip>
            <Chip>数式列の候補を表示する</Chip>
            <Chip>データの強調表示、フィルター処理、並べ替えを行うにはどうすればよいですか?</Chip>
            <button aria-label="候補を更新" className="flex h-7 w-8 items-center justify-center rounded-lg border border-[#a5d6bb]">
              <Svg w={12} h={12}><path d="M10.500 4A5 5 0 1 0 11 6.500M11 .5V4H7.500" /></Svg>
            </button>
          </div>
        </div>
        <div className="w-[11px] shrink-0 bg-[#eeeeee] px-[2px]">
          <div className="mt-[329px] h-[132px] w-[7px] rounded-full bg-[#636363]" />
        </div>
      </div>
      <div className="mr-4 mb-[21px] ml-4 flex h-[100px] shrink-0 flex-col rounded-[5px] border border-[#d1d1d1] bg-white px-2 pt-3 pb-3">
        <textarea aria-label="メッセージ" rows={2} placeholder="質問するか、A1:F6 に対して行う操作を入力してください"
          className="h-10 w-full resize-none overflow-hidden text-[14px] leading-5 outline-none placeholder:text-[#616161]" />
        <div className="mt-auto flex items-center justify-end pr-[7px]">
          <button aria-label="プロンプト"><Svg w={15} h={18} sw={1.2}><path d="M14 14V1H3C1.800 1 1 1.800 1 3v12c0 1.200.8 2 2 2h11M1 15c0-.8.8-1.200 2-1.200h11M4 4h7v2.500H4z" /></Svg></button>
          <span className="ml-2 h-5 w-px bg-[#d1d1d1]" />
          <button aria-label="音声入力" className="ml-[14px]"><Svg w={13} h={18} sw={1.2}><rect x="3.500" y="1" width="6" height="10" rx="3" /><path d="M1 8c0 7.500 11 7.500 11 0M6.500 13.500V17" /></Svg></button>
          <button aria-label="送信" className="ml-[21px] text-[#bdbdbd]"><Svg w={17} h={16}><path d="M1 1l15 7-15 7 2-7zM3 8h7" /></Svg></button>
        </div>
      </div>
    </div>
  </aside>
);

const StatusBar = () => {
  const [zoom, setZoom] = useState(50);
  return (
    <footer className="flex h-[22px] shrink-0 items-center border-t border-[#c6c6c6] bg-[#f4f4f4] text-[12px]">
      <span className="ml-3">準備完了</span>
      <Svg w={15} h={14} className="ml-[19px]"><path d="M6 12.500H.5v-12h13V5M.5 3.500h13M2.500 6.500H6M2.500 9.500H5" /><circle cx="10" cy="9" r="4" /><circle cx="10" cy="9" r="1.500" fill="currentColor" /></Svg>
      <div className="ml-auto flex h-full items-center">
        <button aria-label="標準" className="flex h-full w-10 items-center justify-center bg-[#dedede]"><Svg w={14} h={14}><path d="M.5 .5h13v13H.5zM4.500 .5v13M9.500 .5v13M.5 4.500h13M.5 9.500h13" /></Svg></button>
        <button aria-label="ページ レイアウト" className="flex w-10 justify-center"><Svg w={14} h={14}><path d="M.5 .5h13v13H.5zM3.500 2.500h7v9h-7zM5 5h4M5 7h4M5 9h4" /></Svg></button>
        <button aria-label="改ページ プレビュー" className="flex w-10 justify-center"><Svg w={14} h={14}><path d="M.5 .5h13v13H.5zM.5 8.500h9v-8M5.500 .5v8" /></Svg></button>
        <button aria-label="縮小" className="ml-[5px]"><Svg w={9} h={9}><path d="M0 4.500h8" /></Svg></button>
        <input type="range" aria-label="ズーム" value={zoom} onChange={(e) => setZoom(e.target.value)}
          className="mx-[5px] h-3 w-[100px] appearance-none bg-[linear-gradient(#555,#555)] bg-[length:100%_1px] bg-center bg-no-repeat [&::-webkit-slider-thumb]:h-3 [&::-webkit-slider-thumb]:w-[5px] [&::-webkit-slider-thumb]:appearance-none [&::-webkit-slider-thumb]:bg-[#555]" />
        <button aria-label="拡大"><Svg w={9} h={9}><path d="M0 4.500h8M4.500 0v9" /></Svg></button>
        <span className="mr-[19px] ml-[14px]">100%</span>
      </div>
    </footer>
  );
};

const App = () => (
  <div className="flex h-screen flex-col overflow-hidden border-x border-b border-[#217346] bg-[#efefef] font-['Noto_Sans','Noto_Sans_CJK_JP',sans-serif] text-[#262626]">
    <TitleBar />
    <MenuBar />
    <Ribbon />
    <FormulaBar />
    <main className="flex min-h-0 flex-1">
      <div className="flex min-w-0 flex-1 flex-col">
        <Sheet />
        <SheetTabs />
      </div>
      <CopilotPane />
    </main>
    <StatusBar />
  </div>
);

export default App;
